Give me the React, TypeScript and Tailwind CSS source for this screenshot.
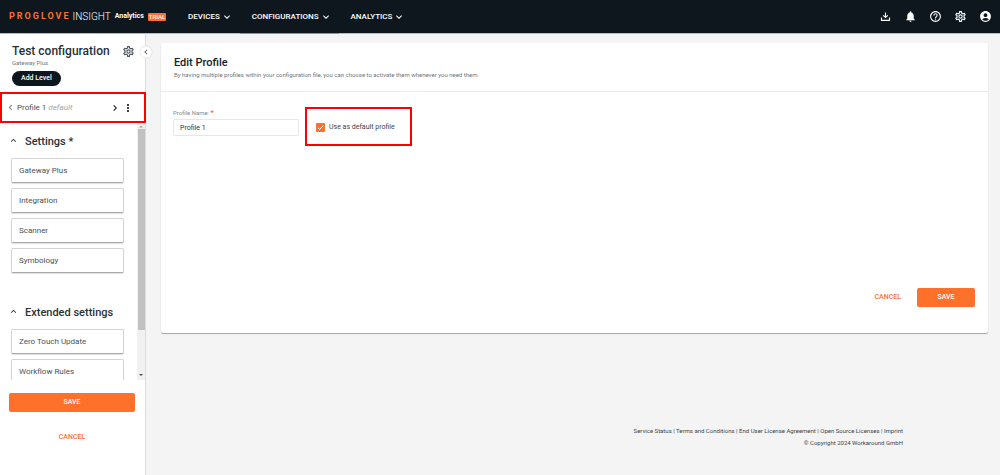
import type { ReactNode } from "react";
import {
  MdAccountCircle,
  MdHelpOutline,
  MdKeyboardArrowDown,
  MdKeyboardArrowLeft,
  MdKeyboardArrowRight,
  MdKeyboardArrowUp,
  MdMoreVert,
  MdNotifications,
  MdOutlineSettings,
} from "react-icons/md";

function DownloadIcon() {
  return (
    <svg viewBox="0 0 24 24" className="size-[11px]" fill="currentColor" aria-hidden="true">
      <path d="M2 14h2.500v5h15v-5H22v6a2 2 0 0 1-2 2H4a2 2 0 0 1-2-2zM10.800 3h2.400v8.500l3-3 1.700 1.700L12 16 6.100 10.200l1.700-1.700 3 3z" />
    </svg>
  );
}

function NavItem({ label, active = false }: { label: string; active?: boolean }) {
  return (
    <button
      type="button"
      className={
        active
          ? "flex items-center gap-px border-b border-[#ff702a] pr-[7px] pl-3"
          : "flex items-center gap-px border-b border-transparent pr-[7px] pl-3"
      }
    >
      {label}
      <MdKeyboardArrowDown className="size-3" />
    </button>
  );
}

function IconButton({ label, children }: { label: string; children: ReactNode }) {
  return (
    <button type="button" aria-label={label} className="flex size-[13px] items-center justify-center">
      {children}
    </button>
  );
}

function Header() {
  return (
    <header className="flex h-[34px] shrink-0 items-stretch border-b border-[#b9bcbe] bg-[#0e171e] pl-[9px] pr-2 text-white">
      <a href="#" className="flex w-[167px] shrink-0 items-center">
        <span className="text-[9px] font-bold tracking-[2px] text-[#ff702a]">PROGLOVE</span>
        <span className="ml-0.5 text-[10px] font-light">INSIGHT</span>
        <span className="ml-1 text-[7px] font-bold">Analytics</span>
        <span className="ml-1 rounded-[1px] bg-[#ff702a] px-px text-[6px] leading-[8px] font-medium">TRIAL</span>
      </a>
      <nav className="-mb-px flex flex-1 items-stretch text-[8px] font-medium">
        <NavItem label="DEVICES" />
        <NavItem label="CONFIGURATIONS" active />
        <NavItem label="ANALYTICS" />
      </nav>
      <div className="flex items-center gap-3">
        <IconButton label="Downloads"><DownloadIcon /></IconButton>
        <IconButton label="Notifications"><MdNotifications className="size-[13px]" /></IconButton>
        <IconButton label="Help"><MdHelpOutline className="size-[13px]" /></IconButton>
        <IconButton label="Settings"><MdOutlineSettings className="size-[13px]" /></IconButton>
        <IconButton label="Account"><MdAccountCircle className="size-[13px]" /></IconButton>
      </div>
    </header>
  );
}

function Section({ title, items }: { title: string; items: string[] }) {
  return (
    <section>
      <h2 className="flex h-4 items-center text-[11px] font-medium text-[#2b3238]">
        <button type="button" className="flex items-center gap-1.5">
          <MdKeyboardArrowUp className="mb-1 size-[11px]" />
          {title}
        </button>
      </h2>
      <ul className="mt-2 flex flex-col gap-[5px] pl-[3px]">
        {items.map((item) => (
          <li key={item} className="flex">
            <button
              type="button"
              className="h-[25px] w-full rounded-xs border border-[#d2d4d5] border-b-[#a9abad] bg-white px-[7px] text-left text-[8px] text-[#4a5157] shadow-[0_1px_1px_#0002]"
            >
              {item}
            </button>
          </li>
        ))}
      </ul>
    </section>
  );
}

function Sidebar() {
  return (
    <aside className="relative z-10 flex w-[146px] shrink-0 flex-col border-r border-[#dcdcdc] bg-white">
      <div className="flex flex-col items-start pt-[9px] pr-2.5 pb-1.5 pl-3">
        <div className="flex w-full items-center justify-between">
          <h1 className="text-[12px] leading-4 font-medium whitespace-nowrap text-[#263037]">Test configuration</h1>
          <button type="button" aria-label="Configuration settings">
            <MdOutlineSettings className="size-[13px] text-[#4a5157]" />
          </button>
        </div>
        <p className="text-[6px] leading-[8px] text-[#70767b]">Gateway Plus</p>
        <button type="button" className="mt-1 h-[15px] rounded-full bg-[#0e171e] px-[9px] text-[7px] font-medium text-white">
          Add Level
        </button>
      </div>
      <button
        type="button"
        aria-label="Collapse sidebar"
        className="absolute top-3 -right-[7px] flex size-3 items-center justify-center rounded-full bg-white text-[#4a5157] shadow-[0_0_1px_#0005]"
      >
        <MdKeyboardArrowLeft className="size-[10px]" />
      </button>
      <div className="-mr-px flex h-[31px] shrink-0 items-center border-2 border-[#ff0000] pr-2.5 pl-[3px]">
        <button type="button" aria-label="Previous profile"><MdKeyboardArrowLeft className="size-[11px] text-[#70767b]" /></button>
        <p className="ml-px flex-1 text-[8px] text-[#4a5157]">
          Profile 1 <em className="text-[#a3a7aa]">default</em>
        </p>
        <button type="button" aria-label="Next profile"><MdKeyboardArrowRight className="size-3 text-[#0e171e]" /></button>
        <button type="button" aria-label="Profile menu" className="ml-px"><MdMoreVert className="size-3 text-[#0e171e]" /></button>
      </div>
      <div className="flex min-h-0 flex-1">
        <div className="flex min-w-0 flex-1 flex-col gap-8 overflow-hidden pt-[11px] pr-[13px] pl-2">
          <Section title="Settings *" items={["Gateway Plus", "Integration", "Scanner", "Symbology"]} />
          <Section title="Extended settings" items={["Zero Touch Update", "Workflow Rules"]} />
        </div>
        <div aria-hidden="true" className="flex w-2 flex-col items-center bg-[#f1f1f1] text-[#505050]">
          <svg viewBox="0 0 8 6" className="h-[6px] w-2 shrink-0"><path d="M2 4.500 4 2.500 6 4.500z" fill="#a3a3a3" /></svg>
          <div className="h-[201px] w-[7px] shrink bg-[#c1c1c1]" />
          <svg viewBox="0 0 8 8" className="mt-auto size-2 shrink-0"><path d="M2 2 4 4 6 2z" fill="currentColor" /></svg>
        </div>
      </div>
      <div className="flex h-[95px] shrink-0 flex-col px-[9px] pt-[13px] pr-2.5 text-[7px] font-medium">
        <button type="button" className="h-[19px] rounded-xs bg-[#ff702a] text-white">SAVE</button>
        <button type="button" className="mt-[17px] h-4 text-[#ff702a]">CANCEL</button>
      </div>
    </aside>
  );
}

function ProfileForm() {
  return (
    <form
      className="flex flex-col rounded-xs bg-white shadow-[0_1px_1px_#0005]"
      onSubmit={(event) => event.preventDefault()}
    >
      <div className="border-b border-[#ececec] px-[13px] pt-[13px] pb-[11px]">
        <h2 className="text-[11px] leading-[14px] font-medium text-[#17212a]">Edit Profile</h2>
        <p className="text-[6px] leading-[10px] text-[#70767b]">
          By having multiple profiles within your configuration file, you can choose to activate them whenever you need them.
        </p>
      </div>
      <div className="flex items-start gap-[6px] px-3 pt-[15px]">
        <div className="flex w-[126px] flex-col">
          <label htmlFor="profile-name" className="text-[6px] leading-[12px] text-[#858a8e]">
            Profile Name: <span className="text-[8px] text-[#ff4b2a]">*</span>
          </label>
          <input
            id="profile-name"
            defaultValue="Profile 1"
            className="h-[17px] rounded-xs border border-[#e6e7e8] px-1.5 text-[7px] text-[#2b3238] outline-none"
          />
        </div>
        <div className="flex h-[39px] items-center border-2 border-[#ff0000] pt-px pr-[15px] pl-[9px]">
          <label className="flex items-center gap-1 text-[7px] whitespace-nowrap text-[#3c444b]">
            <span className="relative flex size-[9px]">
              <input type="checkbox" defaultChecked className="peer size-[9px] appearance-none rounded-[1px] bg-[#c8cacc] checked:bg-[#ff702a]" />
              <svg viewBox="0 0 9 9" className="pointer-events-none absolute inset-0 hidden peer-checked:block" fill="none" stroke="white" aria-hidden="true">
                <path d="M1.800 4.800 3.500 6.400 7.300 2.700" />
              </svg>
            </span>
            Use as default profile
          </label>
        </div>
      </div>
      <div className="mt-[142px] flex justify-end gap-4 pr-[13px] pb-[26px] text-[7px] font-medium">
        <button type="button" className="text-[#ff702a]">CANCEL</button>
        <button type="submit" className="h-[19px] w-[58px] rounded-xs bg-[#ff702a] text-white">SAVE</button>
      </div>
    </form>
  );
}

const footerLinks = ["Service Status", "Terms and Conditions", "End User License Agreement", "Open Source Licenses", "Imprint"];

export default function App() {
  return (
    <div className="flex h-screen flex-col bg-[#f4f4f4] font-['Roboto',sans-serif]">
      <Header />
      <div className="flex min-h-0 flex-1">
        <Sidebar />
        <main className="flex min-w-0 flex-1 flex-col justify-between pt-[9px] pr-3 pl-[15px]">
          <ProfileForm />
          <footer className="pr-[85px] pb-[26px] text-right text-[6px] leading-[12px] text-[#3c444b]">
            <p>
              {footerLinks.map((link, index) => (
                <span key={link}>
                  {index > 0 && " | "}
                  <a href="#">{link}</a>
                </span>
              ))}
            </p>
            <p>© Copyright 2024 Workaround GmbH</p>
          </footer>
        </main>
      </div>
    </div>
  );
}
